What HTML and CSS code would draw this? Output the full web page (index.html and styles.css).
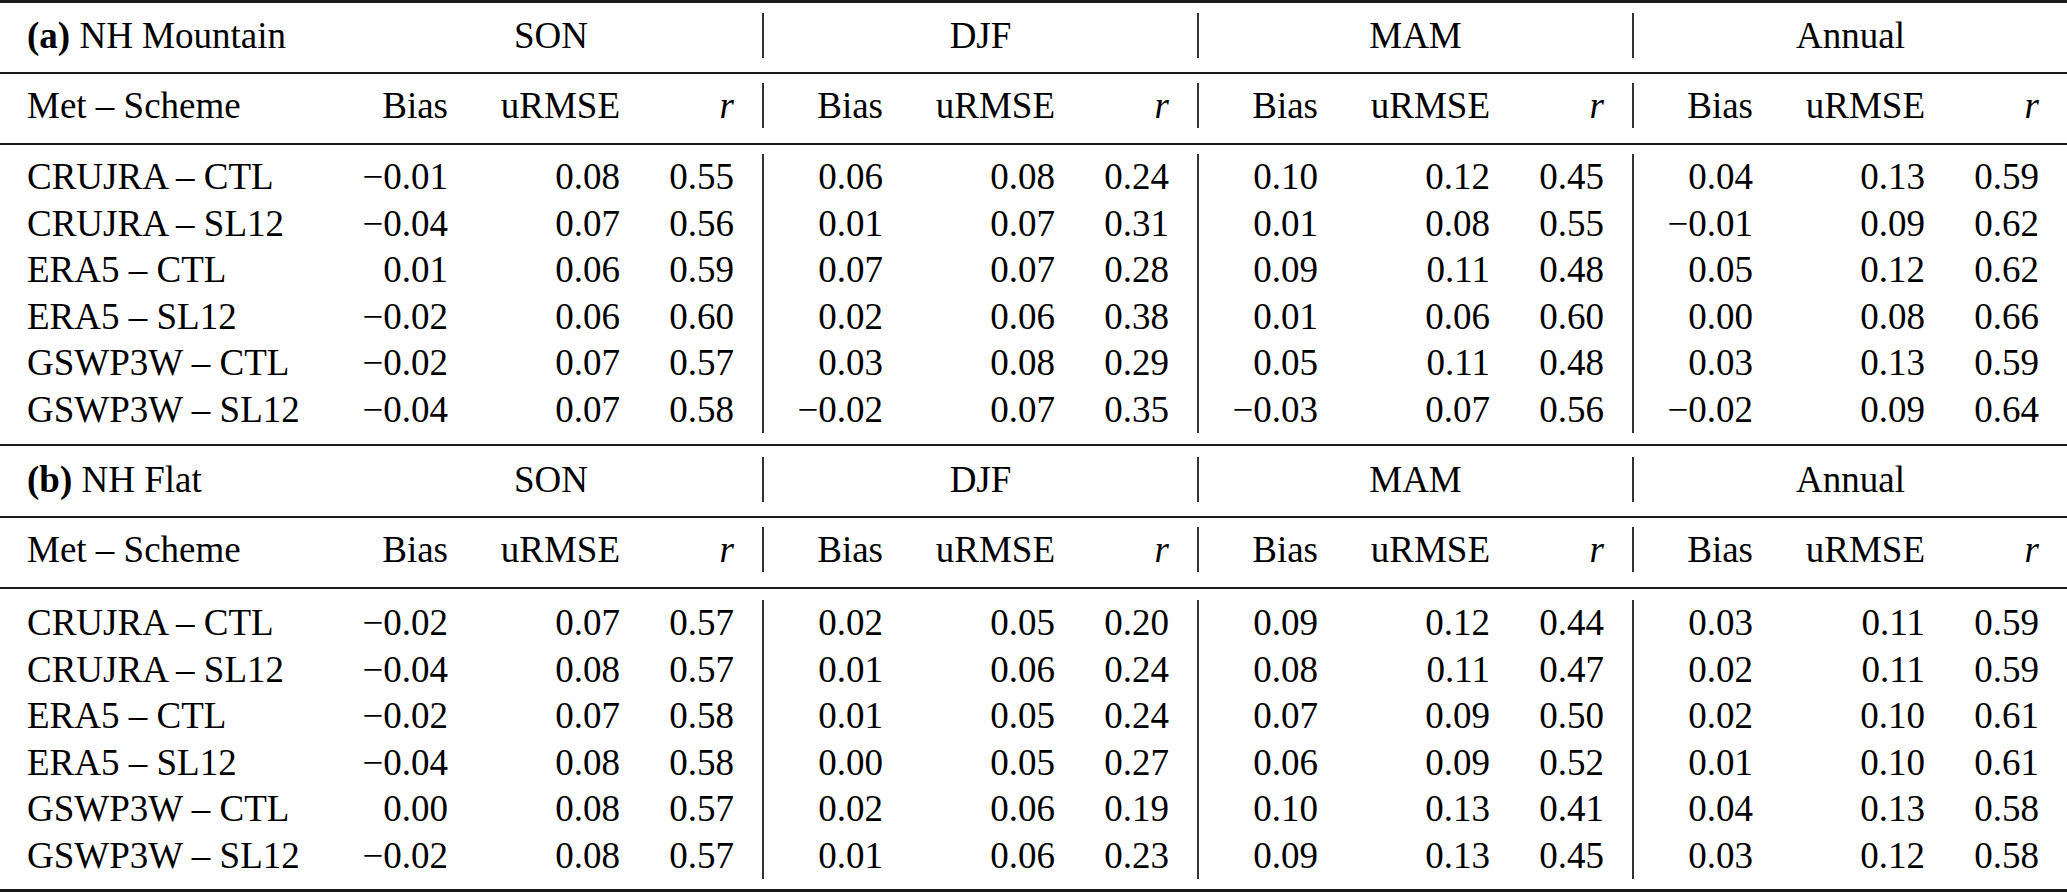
FILE: index.html
```html
<!DOCTYPE html>
<html lang="en">
<head>
<meta charset="utf-8">
<title>Table</title>
<link rel="stylesheet" href="styles.css">
</head>
<body>
<div class="table">
  <section class="panel">
    <div class="band band-head">
      <div class="row">
        <div class="lbl"><b>(a)</b> NH Mountain</div>
        <div class="grp">SON</div>
        <div class="grp sep">DJF</div>
        <div class="grp sep">MAM</div>
        <div class="grp sep">Annual</div>
      </div>
    </div>
    <div class="band band-sub">
      <div class="row">
        <div class="lbl">Met – Scheme</div>
        <div class="c">Bias</div><div class="c">uRMSE</div><div class="c r"><i>r</i></div>
        <div class="c sep">Bias</div><div class="c">uRMSE</div><div class="c r"><i>r</i></div>
        <div class="c sep">Bias</div><div class="c">uRMSE</div><div class="c r"><i>r</i></div>
        <div class="c sep">Bias</div><div class="c">uRMSE</div><div class="c r"><i>r</i></div>
      </div>
    </div>
    <div class="band band-data">
      <div class="row"><div class="lbl">CRUJRA – CTL</div><div class="c">−0.01</div><div class="c">0.08</div><div class="c r">0.55</div><div class="c sep">0.06</div><div class="c">0.08</div><div class="c r">0.24</div><div class="c sep">0.10</div><div class="c">0.12</div><div class="c r">0.45</div><div class="c sep">0.04</div><div class="c">0.13</div><div class="c r">0.59</div></div>
      <div class="row"><div class="lbl">CRUJRA – SL12</div><div class="c">−0.04</div><div class="c">0.07</div><div class="c r">0.56</div><div class="c sep">0.01</div><div class="c">0.07</div><div class="c r">0.31</div><div class="c sep">0.01</div><div class="c">0.08</div><div class="c r">0.55</div><div class="c sep">−0.01</div><div class="c">0.09</div><div class="c r">0.62</div></div>
      <div class="row"><div class="lbl">ERA5 – CTL</div><div class="c">0.01</div><div class="c">0.06</div><div class="c r">0.59</div><div class="c sep">0.07</div><div class="c">0.07</div><div class="c r">0.28</div><div class="c sep">0.09</div><div class="c">0.11</div><div class="c r">0.48</div><div class="c sep">0.05</div><div class="c">0.12</div><div class="c r">0.62</div></div>
      <div class="row"><div class="lbl">ERA5 – SL12</div><div class="c">−0.02</div><div class="c">0.06</div><div class="c r">0.60</div><div class="c sep">0.02</div><div class="c">0.06</div><div class="c r">0.38</div><div class="c sep">0.01</div><div class="c">0.06</div><div class="c r">0.60</div><div class="c sep">0.00</div><div class="c">0.08</div><div class="c r">0.66</div></div>
      <div class="row"><div class="lbl">GSWP3W – CTL</div><div class="c">−0.02</div><div class="c">0.07</div><div class="c r">0.57</div><div class="c sep">0.03</div><div class="c">0.08</div><div class="c r">0.29</div><div class="c sep">0.05</div><div class="c">0.11</div><div class="c r">0.48</div><div class="c sep">0.03</div><div class="c">0.13</div><div class="c r">0.59</div></div>
      <div class="row"><div class="lbl">GSWP3W – SL12</div><div class="c">−0.04</div><div class="c">0.07</div><div class="c r">0.58</div><div class="c sep">−0.02</div><div class="c">0.07</div><div class="c r">0.35</div><div class="c sep">−0.03</div><div class="c">0.07</div><div class="c r">0.56</div><div class="c sep">−0.02</div><div class="c">0.09</div><div class="c r">0.64</div></div>
    </div>
  </section>
  <section class="panel">
    <div class="band band-head">
      <div class="row">
        <div class="lbl"><b>(b)</b> NH Flat</div>
        <div class="grp">SON</div>
        <div class="grp sep">DJF</div>
        <div class="grp sep">MAM</div>
        <div class="grp sep">Annual</div>
      </div>
    </div>
    <div class="band band-sub">
      <div class="row">
        <div class="lbl">Met – Scheme</div>
        <div class="c">Bias</div><div class="c">uRMSE</div><div class="c r"><i>r</i></div>
        <div class="c sep">Bias</div><div class="c">uRMSE</div><div class="c r"><i>r</i></div>
        <div class="c sep">Bias</div><div class="c">uRMSE</div><div class="c r"><i>r</i></div>
        <div class="c sep">Bias</div><div class="c">uRMSE</div><div class="c r"><i>r</i></div>
      </div>
    </div>
    <div class="band band-data">
      <div class="row"><div class="lbl">CRUJRA – CTL</div><div class="c">−0.02</div><div class="c">0.07</div><div class="c r">0.57</div><div class="c sep">0.02</div><div class="c">0.05</div><div class="c r">0.20</div><div class="c sep">0.09</div><div class="c">0.12</div><div class="c r">0.44</div><div class="c sep">0.03</div><div class="c">0.11</div><div class="c r">0.59</div></div>
      <div class="row"><div class="lbl">CRUJRA – SL12</div><div class="c">−0.04</div><div class="c">0.08</div><div class="c r">0.57</div><div class="c sep">0.01</div><div class="c">0.06</div><div class="c r">0.24</div><div class="c sep">0.08</div><div class="c">0.11</div><div class="c r">0.47</div><div class="c sep">0.02</div><div class="c">0.11</div><div class="c r">0.59</div></div>
      <div class="row"><div class="lbl">ERA5 – CTL</div><div class="c">−0.02</div><div class="c">0.07</div><div class="c r">0.58</div><div class="c sep">0.01</div><div class="c">0.05</div><div class="c r">0.24</div><div class="c sep">0.07</div><div class="c">0.09</div><div class="c r">0.50</div><div class="c sep">0.02</div><div class="c">0.10</div><div class="c r">0.61</div></div>
      <div class="row"><div class="lbl">ERA5 – SL12</div><div class="c">−0.04</div><div class="c">0.08</div><div class="c r">0.58</div><div class="c sep">0.00</div><div class="c">0.05</div><div class="c r">0.27</div><div class="c sep">0.06</div><div class="c">0.09</div><div class="c r">0.52</div><div class="c sep">0.01</div><div class="c">0.10</div><div class="c r">0.61</div></div>
      <div class="row"><div class="lbl">GSWP3W – CTL</div><div class="c">0.00</div><div class="c">0.08</div><div class="c r">0.57</div><div class="c sep">0.02</div><div class="c">0.06</div><div class="c r">0.19</div><div class="c sep">0.10</div><div class="c">0.13</div><div class="c r">0.41</div><div class="c sep">0.04</div><div class="c">0.13</div><div class="c r">0.58</div></div>
      <div class="row"><div class="lbl">GSWP3W – SL12</div><div class="c">−0.02</div><div class="c">0.08</div><div class="c r">0.57</div><div class="c sep">0.01</div><div class="c">0.06</div><div class="c r">0.23</div><div class="c sep">0.09</div><div class="c">0.13</div><div class="c r">0.45</div><div class="c sep">0.03</div><div class="c">0.12</div><div class="c r">0.58</div></div>
    </div>
  </section>
</div>
</body>
</html>
```

FILE: styles.css
```css
html, body {
  margin: 0;
  padding: 0;
  background: #fff;
}

body {
  font-family: "Liberation Serif", "Times New Roman", serif;
  font-size: 37px;
  color: #000;
}

.table {
  width: 2067px;
  border-top: 3px solid #1a1a1a;
}

.band {
  border-bottom: 2px solid #1a1a1a;
}

.band-head {
  padding: 10px 0 14px;
}

.panel + .panel .band-head {
  padding-top: 11px;
}

.band-sub {
  padding: 9px 0 15px;
}

.band-head .row,
.band-sub .row {
  height: 45px;
  line-height: 45px;
}

.band-data {
  padding: 9px 0 11px;
}

.panel + .panel .band-data {
  padding: 11px 0 10px;
  border-bottom-width: 3px;
}

.row {
  display: grid;
  grid-template-columns: 340px 108px 172px 142px repeat(3, 121px 172px 142px);
  height: 46.5px;
  line-height: 46.5px;
}

.lbl {
  padding-left: 27px;
  white-space: nowrap;
}

.c {
  text-align: right;
  white-space: nowrap;
  box-sizing: border-box;
}

.c.r {
  padding-right: 28px;
}

.grp {
  grid-column: span 3;
  text-align: center;
  box-sizing: border-box;
}

.sep {
  border-left: 2px solid #333;
}
```
